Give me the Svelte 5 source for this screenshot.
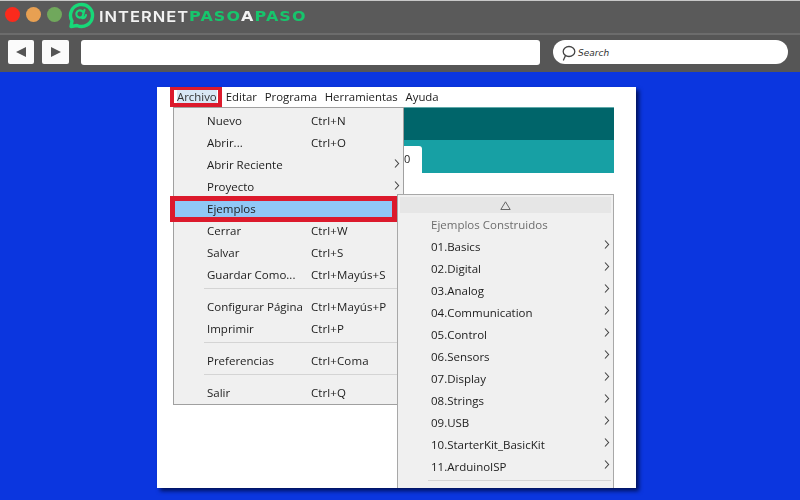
<script>
  const menuItems = [
    { label: 'Nuevo', key: 'Ctrl+N' },
    { label: 'Abrir...', key: 'Ctrl+O' },
    { label: 'Abrir Reciente', arrow: true },
    { label: 'Proyecto', arrow: true },
    { label: 'Ejemplos', hl: true },
    { label: 'Cerrar', key: 'Ctrl+W' },
    { label: 'Salvar', key: 'Ctrl+S' },
    { label: 'Guardar Como...', key: 'Ctrl+Mayús+S' },
    { sep: true },
    { label: 'Configurar Página', key: 'Ctrl+Mayús+P' },
    { label: 'Imprimir', key: 'Ctrl+P' },
    { sep: true },
    { label: 'Preferencias', key: 'Ctrl+Coma' },
    { sep: true },
    { label: 'Salir', key: 'Ctrl+Q' }
  ];
  const examples = ['01.Basics','02.Digital','03.Analog','04.Communication','05.Control','06.Sensors','07.Display','08.Strings','09.USB','10.StarterKit_BasicKit','11.ArduinoISP'];
  const bar = ['Editar','Programa','Herramientas','Ayuda'];
</script>

<div class="page">
  <header class="browser">
    <div class="titlebar">
      <span class="dot red"></span>
      <span class="dot orange"></span>
      <span class="dot green"></span>
      <svg class="logo" width="30" height="28" viewBox="0 0 30 28" fill="none" stroke="#17d978">
        <path d="M6 25.5 L7 20 A11 11 0 1 1 12 24.5 Z" stroke-width="3.4" stroke-linejoin="round"/>
        <path d="M19.5 9 L17 17 M18.5 13 A3.6 3.6 0 1 0 17.5 15.5 M17 17 Q20 17.5 21 14" stroke-width="2.2" stroke-linecap="round"/>
      </svg>
      <div class="brand"><span class="w">INTERNET</span><span class="g">PASO</span><span class="w a">A</span><span class="g">PASO</span></div>
    </div>
    <div class="navbar">
      <button class="nav" aria-label="Atrás"><svg width="12" height="12" viewBox="0 0 12 12"><path d="M11 1 V11 L1 6 Z" fill="#555"/></svg></button>
      <button class="nav fwd" aria-label="Adelante"><svg width="12" height="12" viewBox="0 0 12 12"><path d="M1 1 V11 L11 6 Z" fill="#555"/></svg></button>
      <div class="address"></div>
      <div class="search">
        <svg width="15" height="16" viewBox="0 0 15 16" fill="none" stroke="#444" stroke-width="1.3"><ellipse cx="8" cy="6.5" rx="5.8" ry="5"/><path d="M4.5 10.5 L2.5 15" stroke-linecap="round"/></svg>
        <span>Search</span>
      </div>
    </div>
  </header>

  <main class="stage">
    <div class="window">
      <nav class="menubar">
        <span class="first">Archivo</span>
        {#each bar as b}<span>{b}</span>{/each}
      </nav>
      <div class="editor">
        <div class="dark"></div>
        <div class="teal"><div class="tab">0</div></div>
      </div>

      <div class="menu">
        {#each menuItems as it}
          {#if it.sep}
            <div class="sep"></div>
          {:else}
            <div class="row" class:hl={it.hl}>
              <span class="lbl">{it.label}</span>
              {#if it.key}<span class="key">{it.key}</span>{/if}
              {#if it.arrow}
                <svg class="chev" width="6" height="9" viewBox="0 0 6 9" fill="none" stroke="#444" stroke-width="1.1"><path d="M1 .5 L4.6 4.5 L1 8.5"/></svg>
              {/if}
            </div>
          {/if}
        {/each}
      </div>

      <div class="submenu">
        <div class="up"><svg width="11" height="9" viewBox="0 0 11 9" fill="none" stroke="#666"><path d="M5.5 .8 L10.2 8.5 H.8 Z"/></svg></div>
        <div class="srow muted">Ejemplos Construidos</div>
        {#each examples as e}
          <div class="srow">
            <span>{e}</span>
            <svg class="schev" width="6" height="9" viewBox="0 0 6 9" fill="none" stroke="#444" stroke-width="1.1"><path d="M1 .5 L4.6 4.5 L1 8.5"/></svg>
          </div>
        {/each}
        <div class="ssep"></div>
      </div>

      <div class="mark markbar"></div>
      <div class="mark markrow"></div>
    </div>
  </main>
</div>

<style>
  :global(body) { margin: 0; }
  .page {
    width: 800px; height: 500px; overflow: hidden;
    display: flex; flex-direction: column;
    background: #0b36df;
    font-family: "Open Sans", "Noto Sans", sans-serif;
    font-size: 11.5px; color: #1c1c1c;
  }
  .browser { height: 72px; background: #565656; flex: none; }
  .titlebar {
    box-sizing: border-box; height: 35px;
    background: #5a5a5a; border-top: 1px solid #c8c8c8;
    border-bottom: 2px solid #6c6c6c;
    display: flex; align-items: center; padding-left: 5px;
  }
  .dot { width: 15px; height: 15px; border-radius: 50%; margin-right: 6px; margin-top: -6px; }
  .red { background: #fb2a1c; }
  .orange { background: #e8a052; }
  .green { background: #70a85c; }
  .logo { margin: -4px 0 0 -3px; flex: none; }
  .brand {
    margin: -1px 0 0 4px; display: flex; align-items: center;
    font-family: "Inter", sans-serif; font-weight: 600; font-size: 15px;
    letter-spacing: .9px; line-height: 1;
    transform: scaleX(1.1); transform-origin: left center;
  }
  .brand .w { color: #f2f2f2; }
  .brand .g, .brand .a {
    font-family: "DejaVu Sans", sans-serif; font-weight: 700; font-size: 14.5px; letter-spacing: 1px;
  }
  .brand .g { color: #17c56c; }
  .navbar { display: flex; align-items: flex-start; padding: 5px 12px 0 8px; }
  .nav {
    width: 26px; height: 24px; padding: 0; border: 0; background: #fbfbfb; border-radius: 2px;
    display: flex; align-items: center; justify-content: center; margin-right: 8px;
  }
  .fwd { width: 27px; margin-right: 12px; }
  .address { width: 459px; height: 25px; background: #fff; border-radius: 3px; margin-right: 13px; }
  .search {
    flex: 1; height: 24px; background: #fff; border-radius: 12px; box-sizing: border-box;
    display: flex; align-items: center; gap: 2px; padding: 2px 0 0 8px;
    font-family: "DejaVu Sans", sans-serif; font-style: italic; font-size: 9px; color: #333;
  }
  .stage { flex: 1; padding: 15px 0 0 157px; filter: drop-shadow(3px 3px 2px #00125a); }
  .window {
    position: relative; width: 479px; height: 401px; background: #fff; overflow: hidden;
  }
  .menubar { height: 20px; box-sizing: border-box; padding: 0 0 2px 20px; display: flex; align-items: center; font-size: 11.4px; }
  .menubar span { margin-right: 7.7px; white-space: nowrap; }
  .menubar .first { color: #333; background: #d9e8f5; margin-right: 9px; }
  .editor { margin-left: 247px; width: 210px; border-top: 1px solid #5fa9a9; }
  .dark { height: 32px; background: #00656a; }
  .teal { height: 33px; background: #17a0a4; display: flex; align-items: flex-end; }
  .tab {
    width: 18px; height: 27px; background: #fff; border-radius: 0 3px 0 0; box-sizing: border-box;
    padding: 7px 0 0 0; font-size: 11px; line-height: 12px;
  }
  .menu {
    position: absolute; left: 16px; top: 20px; width: 231px; box-sizing: border-box;
    background: #f0f0f0; border: 1px solid #a0a0a0; padding: 1px 0 0;
    height: 298px;
  }
  .row { height: 22px; display: flex; align-items: center; position: relative; }
  .lbl { position: absolute; left: 33px; white-space: nowrap; }
  .key { position: absolute; left: 137px; white-space: nowrap; letter-spacing: .1px; }
  .chev { position: absolute; left: 220px; top: 6px; }
  .sep { height: 1px; margin: 3px 0 6px 30px; background: #d4d4d4; }
  .submenu {
    position: absolute; left: 240px; top: 107px; width: 217px; height: 310px; box-sizing: border-box;
    background: #f0f0f0; border: 1px solid #a8a8a8; padding: 2px 2px 0 0;
  }
  .up {
    height: 16px; margin-left: 2px; background: #e6e6e6; display: flex; align-items: center; justify-content: center;
  }
  .srow { height: 22px; display: flex; align-items: center; padding-left: 33px; position: relative; }
  .muted { color: #6d6d6d; }
  .schev { position: absolute; left: 206px; top: 5px; }
  .ssep { height: 1px; background: #d4d4d4; margin: 3px 0 0 30px; }
  .mark { position: absolute; box-sizing: border-box; border: 4px solid #dc1a2c; }
  .markbar { left: 13px; top: 0; width: 52px; height: 20px; border-top-width: 3px; }
  .markrow { left: 13px; top: 109px; width: 227px; height: 26px; border-width: 5px; }
  .menu .hl { background: #90c8f6; }
</style>
